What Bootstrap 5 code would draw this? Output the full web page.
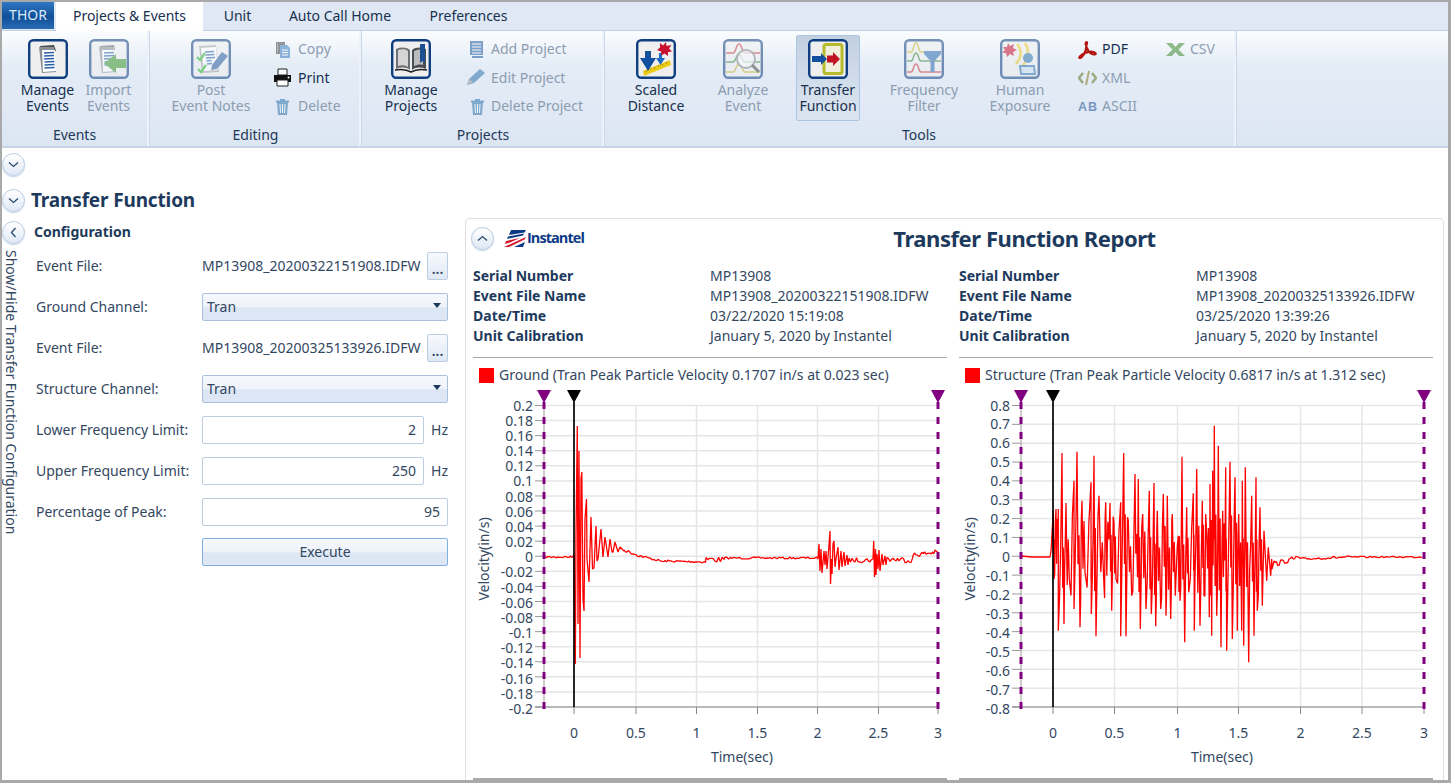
<!doctype html>
<html lang="en">
<head>
<meta charset="utf-8">
<title>THOR - Transfer Function</title>
<link href="https://cdn.jsdelivr.net/npm/bootstrap@5.3.0/dist/css/bootstrap.min.css" rel="stylesheet">
<style>
html,body{height:100%;margin:0;overflow:hidden;background:#fff}
body{font-family:"Noto Sans","Open Sans",sans-serif;font-size:14px;color:#33475f;line-height:20px}
.appframe{width:1451px;height:783px;border:solid #a9a9a9;border-width:2px 3px 3px 2px;overflow:hidden;display:flex;flex-direction:column}
.tabrow{height:28px;background:#dfe8f4;display:flex;align-items:stretch;flex:none}
.thor{width:52px;height:27px;background:linear-gradient(#2f78c4,#0f4f98 55%,#2a6cb4);color:#dbe9f8;text-align:center;line-height:26px;font-size:14px}
.rtab{color:#16304f;padding:4px 0 0;text-align:center;height:28px}
.rtab.on{background:#fff;margin-left:2px;width:147px;height:29px;position:relative;z-index:1}
.rtab.t1{width:69px}
.rtab.t2{width:136px}
.rtab.t3{width:121px}
.ribbon{height:118px;flex:none;display:flex;background:linear-gradient(#fbfdff,#e4ecf6 30%,#dce6f3);border-top:1px solid #bfd0e4;border-bottom:2px solid #c6d6e8}
.rgroup{display:flex;flex-direction:column;border-right:2px solid #eef3f9;flex:none;box-shadow:1px 0 0 #c9d7e8}
.rgbody{display:flex;height:94px;padding-top:4px}
.rglabel{text-align:center;color:#1e3857;height:20px;line-height:20px}
.rglabel.nudge{padding-left:3px}
.bigbtn{display:flex;flex-direction:column;align-items:center;padding-top:4px;color:#16304f;line-height:16px;height:86px;text-align:center;flex:none}
.bigbtn svg{margin-bottom:3px;flex:none}
.bigbtn.off,.smallbtn.off{color:#8c9db1}
.off svg{opacity:.55}
.picked{background:linear-gradient(#c3d0e0,#d3deeb 60%,#dbe5f1);border:1px solid #a9c6e6;border-radius:2px;padding-top:3px;width:64px}
.smallstack{display:flex;flex-direction:column;flex:none;padding-top:0}
.smallbtn{display:flex;align-items:center;height:28.5px;color:#16304f;white-space:nowrap}
.smallbtn svg{flex:none;margin-right:6px}
.smallbtn svg.inset{margin-left:3px;margin-right:4px}
.smallbtn svg.tight{margin-right:5px}
.smallbtn svg.tighter{margin-right:4px}
.w61{width:61px}.w80{width:80px}.w70{width:70px}
.g1{width:147px}.g1 .rgbody{padding-left:15px}
.g2{width:212px}.g2 .rgbody{padding-left:22px;gap:22px}
.g3{width:243px}.g3 .rgbody{padding-left:15px;gap:19px}
.g4{width:632px}.g4 .rgbody{padding-left:17px}
.m17{margin-left:17px}.m18{margin-left:18px}.m29{margin-left:29px}.m26{margin-left:26px}.m23{margin-left:23px}
.roundbtn{width:23px;height:23px;border-radius:50%;background:linear-gradient(#fff,#dfe8f5);border:1px solid #b9cbe0;display:flex;align-items:center;justify-content:center;flex:none;box-shadow:0 1px 1px #c9d6e6}
.spacer1{height:5px;flex:none}
.ttlrow{height:42px;padding-top:6px;display:flex;align-items:center;flex:none}
.ttlrow h1{font-size:19px;font-weight:700;color:#1d3a5c;margin:0 0 0 6px;letter-spacing:-.15px;line-height:26px}
.mainrow{display:flex;flex:1;min-height:0}
.sidebar{width:23px;flex:none;padding-top:3px}
.vtext{writing-mode:vertical-rl;color:#33475f;margin:6px 0 0 -1px;line-height:20px;white-space:nowrap}
.cfg{width:425px;flex:none;padding:0 0 0 9px}
.cfg h2{font-size:14px;font-weight:700;color:#1d3a5c;margin:4px 0 3px;line-height:20px}
.frow{height:41px;display:flex;align-items:center;padding-left:2px;flex:none;width:414px}
.frow.last{margin-top:-1px}
.frow label{width:166px;flex:none;margin:0}
.fwide{flex:1}
.fileval{white-space:nowrap;flex:1}
.form-control.tb,.form-select.tb,.btn.tb{height:28px;border-radius:2px;font-size:14px;line-height:20px;padding:3px 4px;color:#33475f;box-shadow:none}
.form-control.tb{border:1px solid #bccde1;text-align:right;padding-right:7px;background:#fff}
.form-select.tb{border:1px solid #a9c0dc;background:linear-gradient(#f6f9fd,#eef3fa 48%,#dce6f4 54%,#dde7f5);appearance:none}
.selwrap{position:relative;flex:1}
.selwrap::after{content:"";position:absolute;right:7px;top:10px;border:solid transparent;border-width:5px 4.5px 0;border-top-color:#1d3a5c}
.btn.tb.dots{width:21px;padding:6px 0 0;border:1px solid #bccde1;background:linear-gradient(#f7fafd,#dfe8f5);flex:none;line-height:14px;font-weight:600}
.btn.tb.exec{width:246px;border:1px solid #7fb0e0;background:linear-gradient(#f6f9fd,#eef3fa 48%,#dce6f4 54%,#dde7f5);padding:3px 0}
.hz{width:24px;text-align:right;flex:none}
.shortinp{flex:1}
.report{flex:1;border:1px solid #dedede;border-bottom:0;border-radius:5px 5px 0 0;margin-right:4px;display:flex;flex-direction:column;min-width:0;margin-left:15px}
.rhead{height:38px;display:flex;align-items:center;padding-left:5px;flex:none;position:relative}
.rhead h3{position:absolute;left:0;right:0;text-align:center;padding-left:140px;font-size:22px;font-weight:700;color:#1d3a5c;margin:0;letter-spacing:-.45px;line-height:28px}
.logoarea{display:flex;align-items:center;margin-left:10px}
.logoname{font-family:"Open Sans",sans-serif;font-weight:700;font-size:14.5px;letter-spacing:-.95px;color:#0c3a86}
.cols{display:flex;gap:12px;padding:9px 0 0 7px}
.repcol{width:474px;flex:none}
.kv{display:flex;height:20px}
.kv b{width:237px;font-weight:700;color:#1d3a5c;flex:none}
.kv span{white-space:nowrap}
.rule{border-top:1px solid #a8a8a8;margin:11px 0 0;height:0}
.legendrow{display:flex;align-items:center;height:30px;padding:4px 0 0 6px;gap:5px;white-space:nowrap}
.swatch{width:15px;height:15px;background:#f00;flex:none}
.chartsvg{display:block;width:474px;height:382px;margin-top:-1px}
.chartsvg text{font-family:"Noto Sans","Open Sans",sans-serif;font-size:14px;fill:#33475f}
.botbar{height:3px;background:#a9a9a9;margin-top:9px}
</style>
</head>
<body>
<div class="appframe">
  <div class="tabrow">
    <div class="thor">THOR</div>
    <div class="rtab on">Projects &amp; Events</div>
    <div class="rtab t1">Unit</div>
    <div class="rtab t2">Auto Call Home</div>
    <div class="rtab t3">Preferences</div>
  </div>
  <div class="ribbon">
    <div class="rgroup g1">
      <div class="rgbody">
        <div class="bigbtn w61"><svg width="40" height="40" viewBox="0 0 40 40"><rect x="1.2" y="1.2" width="37.6" height="37.6" rx="4" fill="#efefef" stroke="#0f3f80" stroke-width="2.4"/><path d="M12 7l14-1 2 6-14 1z" fill="#4a4a4a"/><path d="M11 8l3 26 14-1-2-25z" fill="#8b8f96"/><path d="M14 11h13l1 21-13 1z" fill="#fff"/><path d="M16 14l10-.5M16 17l10-.5M16 20l10-.5M16.500 23l10-.5M16.500 26l10-.5M16.500 29l10-.5" stroke="#2a5fa8" stroke-width="1.400"/></svg>Manage<br>Events</div>
        <div class="bigbtn w61 off"><svg width="40" height="40" viewBox="0 0 40 40"><rect x="1.2" y="1.2" width="37.6" height="37.6" rx="4" fill="#efefef" stroke="#0f3f80" stroke-width="2.4"/><path d="M11 7l14-1 1 6-14 1z" fill="#666"/><path d="M10 8l3 26 14-1-2-25z" fill="#8b8f96"/><path d="M13 11h13l1 21-13 1z" fill="#fff"/><path d="M15 14l10-.5M15 17l10-.5M15 20l10-.5M15.500 23l6-.5M15.500 26l6-.5" stroke="#2a5fa8" stroke-width="1.300"/><path d="M37 20v9H27v5L15 24.500 27 15v5z" fill="#3f9b2c"/></svg>Import<br>Events</div>
      </div>
      <div class="rglabel">Events</div>
    </div>
    <div class="rgroup g2">
      <div class="rgbody">
        <div class="bigbtn w80 off"><svg width="40" height="40" viewBox="0 0 40 40"><rect x="1.2" y="1.2" width="37.6" height="37.6" rx="4" fill="#efefef" stroke="#0f3f80" stroke-width="2.4"/><path d="M8 7l17-1 3 27-17 1z" fill="#a7a7a7"/><path d="M10 9l15-1 2 23-14 1z" fill="#fff"/><path d="M14 13l9-.5M14.500 16l9-.5M15 19l9-.5M15.500 22l5-.5M16 25l5-.5" stroke="#2a5fa8" stroke-width="1.300"/><path d="M6 18l3 3 5-7M7 30l3 3 5-7" stroke="#26b526" stroke-width="2.200" fill="none"/><path d="M21 26l10-13 6 4-11 13-6 1z" fill="#2d5e9e"/></svg>Post<br>Event Notes</div>
        <div class="smallstack">
          <div class="smallbtn off"><svg width="19" height="19" viewBox="0 0 19 19"><path d="M3 2h9v12H3z" fill="#444"/><path d="M4 4h1M4 6h1M4 8h1M4 10h1M4 12h1" stroke="#bbb"/><path d="M7 5h7l3 3v10H7z" fill="#3b7ebd"/><path d="M9 10h6M9 12.500h6M9 15h6" stroke="#fff" stroke-width="1.100"/></svg>Copy</div>
          <div class="smallbtn"><svg width="19" height="19" viewBox="0 0 19 19"><path d="M5 1h9v6H5z" fill="#fff" stroke="#222"/><path d="M1 7h17v7H1z" fill="#111"/><path d="M4 12h11v6H4z" fill="#fff" stroke="#222"/><circle cx="15.500" cy="9.500" r="1" fill="#fff"/></svg>Print</div>
          <div class="smallbtn off"><svg width="19" height="19" viewBox="0 0 19 19"><path d="M4 5h11l-1 13H5z" fill="#2f74ad"/><path d="M3 3.500h13v2H3zM7 2h5v2H7z" fill="#2f74ad"/><path d="M7 7l.5 9M9.500 7v9M12 7l-.5 9" stroke="#fff" stroke-width="1"/></svg>Delete</div>
        </div>
      </div>
      <div class="rglabel nudge">Editing</div>
    </div>
    <div class="rgroup g3">
      <div class="rgbody">
        <div class="bigbtn w70"><svg width="40" height="40" viewBox="0 0 40 40"><rect x="1.2" y="1.2" width="37.6" height="37.6" rx="4" fill="#efefef" stroke="#0f3f80" stroke-width="2.4"/><path d="M5 10c5-2 10-2 14 1v20c-4-3-9-3-14-1z" fill="#6d7175"/><path d="M7 11c4-1 8-1 10 1v16c-3-2-7-2-10-1z" fill="#d5d5d5"/><path d="M21 11c4-3 9-3 14-1v20c-5-2-10-2-14 1z" fill="#4a4d52"/><path d="M23 12c3-1 6-2 9-1v15c-3-1-6 0-9 1z" fill="#bbb"/><path d="M29 5h5v19l-2.500-2-2.500 2z" fill="#1d4f94"/><path d="M4 31c5-1 11-1 16 2 5-3 11-3 16-2" stroke="#222" stroke-width="1.500" fill="none"/></svg>Manage<br>Projects</div>
        <div class="smallstack">
          <div class="smallbtn off"><svg class="inset" width="19" height="19" viewBox="0 0 19 19"><path d="M2 1h13v14H2z" fill="#1f5d9f"/><path d="M4 16h11v2H4z" fill="#1f5d9f"/><path d="M4 4h9M4 7h9M4 10h9M4 13h9" stroke="#fff" stroke-width="1"/></svg>Add Project</div>
          <div class="smallbtn off"><svg class="tighter" width="22" height="19" viewBox="0 0 22 19"><path d="M2 17l2-6L15 1l5 4-11 10z" fill="#2f74ad"/><path d="M2 17l2-6 4 3z" fill="#999"/></svg>Edit Project</div>
          <div class="smallbtn off"><svg class="inset" width="19" height="19" viewBox="0 0 19 19"><path d="M4 5h11l-1 13H5z" fill="#2f74ad"/><path d="M3 3.500h13v2H3zM7 2h5v2H7z" fill="#2f74ad"/><path d="M7 7l.5 9M9.500 7v9M12 7l-.5 9" stroke="#fff" stroke-width="1"/></svg>Delete Project</div>
        </div>
      </div>
      <div class="rglabel nudge">Projects</div>
    </div>
    <div class="rgroup g4">
      <div class="rgbody">
        <div class="bigbtn w70"><svg width="40" height="40" viewBox="0 0 40 40"><rect x="1.2" y="1.2" width="37.6" height="37.6" rx="4" fill="#efefef" stroke="#0f3f80" stroke-width="2.4"/><path d="M7 32l27-11 1 5-27 11z" fill="#eccb16"/><path d="M10 33l1-2M14 31l1-2M18 30l1-2M22 28l1-2M26 27l1-2M30 25l1-2" stroke="#a08a10" stroke-width=".8"/><path d="M4 19h5v-7h6v7h5L12 32z" fill="#124f9e"/><path d="M20 19h3v-5h3v5h3l-4.500 7z" fill="#1f6bc4"/><path d="M24 4l3 2.500L30 3l.5 4 5-1-2.500 3.500 3 3-4 .5 0 4-3.500-2.500-3 2-.5-4-4-1.500 3-2.500z" fill="#c8102e"/></svg>Scaled<br>Distance</div>
        <div class="bigbtn w70 m17 off"><svg width="40" height="40" viewBox="0 0 40 40"><rect x="1.2" y="1.2" width="37.6" height="37.6" rx="4" fill="#efefef" stroke="#0f3f80" stroke-width="2.4"/><path d="M3 14h7c3 0 3-9 6-9s3 9 6 9h15" stroke="#c63b3b" stroke-width="1.500" fill="none"/><path d="M3 23h7c3 0 3-8 6-8s3 8 6 8h15" stroke="#3d8a3d" stroke-width="1.500" fill="none"/><path d="M3 33h7c3 0 3-8 6-8s3 8 6 8h15" stroke="#c6b52b" stroke-width="1.500" fill="none"/><circle cx="23" cy="20" r="9" fill="#fff" fill-opacity=".7" stroke="#888" stroke-width="2"/><path d="M29 26l7 7" stroke="#444" stroke-width="3"/></svg>Analyze<br>Event</div>
        <div class="bigbtn m18 picked"><svg width="40" height="40" viewBox="0 0 40 40"><rect x="1.2" y="1.2" width="37.6" height="37.6" rx="4" fill="#efefef" stroke="#0f3f80" stroke-width="2.4"/><rect x="16" y="5.500" width="18" height="29" rx="2" fill="#f0f0dc" stroke="#b6bb2c" stroke-width="3"/><path d="M4 17h9v-3l6 6-6 6v-3H4z" fill="#124f9e"/><path d="M19 16.500h6V13l7 7-7 7v-3.500h-6z" fill="#c01323"/></svg>Transfer<br>Function</div>
        <div class="bigbtn w70 m29 off"><svg width="40" height="40" viewBox="0 0 40 40"><rect x="1.2" y="1.2" width="37.6" height="37.6" rx="4" fill="#efefef" stroke="#0f3f80" stroke-width="2.4"/><path d="M3 13h4c3 0 2-9 5-9s2 9 5 9h20" stroke="#c6b52b" stroke-width="1.500" fill="none"/><path d="M3 22h4c3 0 2-8 5-8s2 8 5 8h20" stroke="#3d8a3d" stroke-width="1.500" fill="none"/><path d="M3 33h4c3 0 2-8 5-8s2 8 5 8h20" stroke="#c63b3b" stroke-width="1.500" fill="none"/><path d="M20 12h17v3l-6.500 7v11h-4V22L20 15z" fill="#2d6cb0"/></svg>Frequency<br>Filter</div>
        <div class="bigbtn w70 m26 off"><svg width="40" height="40" viewBox="0 0 40 40"><rect x="1.2" y="1.2" width="37.6" height="37.6" rx="4" fill="#efefef" stroke="#0f3f80" stroke-width="2.4"/><path d="M8 4l2 3 4-2-1 4 4 2-4 2 1 4-4-2-3 3-1-4-4 0 3-3-2-3 4 0z" fill="#c8102e"/><path d="M17 5c5 6 5 13-1 20M25 4c5 8 4 17-4 24" stroke="#e7c92a" stroke-width="2.600" fill="none"/><circle cx="28" cy="19" r="5" fill="#2f74ad"/><path d="M20 27h14l1 8H21z" fill="#cfe0f1" stroke="#2f74ad" stroke-width="2"/></svg>Human<br>Exposure</div>
        <div class="smallstack m23">
          <div class="smallbtn"><svg class="tight" width="19" height="19" viewBox="0 0 19 19"><path d="M8.500 2c-1.500 0-1 4 2 9 2 3 5 4 7 3 1-1-3-3-7-2-4 1-8 3-9 5-1 2 2 1 4-2 2-3 3-7 3-10 .5-2 1-3 0-3z" fill="none" stroke="#b3140f" stroke-width="2.200"/></svg>PDF</div>
          <div class="smallbtn off"><svg class="tight" width="19" height="19" viewBox="0 0 19 19"><path d="M5 5L1 10l4 5M14 5l4 5-4 5" stroke="#5c7a1e" stroke-width="2.500" fill="none"/><path d="M11 3L8 17" stroke="#8a7a1e" stroke-width="2"/></svg>XML</div>
          <div class="smallbtn off"><svg class="tight" width="19" height="19" viewBox="0 0 19 19"><text x="0" y="14" font-family="Liberation Sans" font-weight="700" font-size="12.500" letter-spacing="1" fill="#1f4f96">AB</text></svg>ASCII</div>
        </div>
        <div class="smallstack m29">
          <div class="smallbtn off"><svg class="tight" width="19" height="19" viewBox="0 0 19 19"><path d="M0 3h6l3.500 4L13 3h6l-6.500 6.500L19 16h-6l-3.500-4L6 16H0l6.500-6.500z" fill="#3f8a2c"/></svg>CSV</div>
        </div>
      </div>
      <div class="rglabel">Tools</div>
    </div>
  </div>

  <div class="spacer1"></div>
  <div class="d-flex flex-none"><span class="roundbtn"><svg width="11" height="7" viewBox="0 0 11 7"><path d="M1 1.500l4.500 4 4.500-4" fill="none" stroke="#2a4a70" stroke-width="1.300"/></svg></span></div>
  <div class="ttlrow">
    <span class="roundbtn"><svg width="11" height="7" viewBox="0 0 11 7"><path d="M1 1.500l4.500 4 4.500-4" fill="none" stroke="#2a4a70" stroke-width="1.300"/></svg></span>
    <h1>Transfer Function</h1>
  </div>
  <div class="mainrow">
    <div class="sidebar">
      <span class="roundbtn"><svg width="7" height="11" viewBox="0 0 7 11"><path d="M5.500 1l-4 4.500 4 4.500" fill="none" stroke="#2a4a70" stroke-width="1.300"/></svg></span>
      <div class="vtext">Show/Hide Transfer Function Configuration</div>
    </div>
    <div class="cfg">
      <h2>Configuration</h2>
      <div class="frow"><label>Event File:</label><span class="fileval">MP13908_20200322151908.IDFW</span><button class="btn tb dots">...</button></div>
      <div class="frow"><label>Ground Channel:</label><div class="selwrap"><select class="form-select tb"><option>Tran</option></select></div></div>
      <div class="frow"><label>Event File:</label><span class="fileval">MP13908_20200325133926.IDFW</span><button class="btn tb dots">...</button></div>
      <div class="frow"><label>Structure Channel:</label><div class="selwrap"><select class="form-select tb"><option>Tran</option></select></div></div>
      <div class="frow"><label>Lower Frequency Limit:</label><input class="form-control tb shortinp" value="2"><span class="hz">Hz</span></div>
      <div class="frow"><label>Upper Frequency Limit:</label><input class="form-control tb shortinp" value="250"><span class="hz">Hz</span></div>
      <div class="frow"><label>Percentage of Peak:</label><input class="form-control tb fwide" value="95"></div>
      <div class="frow last"><label></label><button class="btn tb exec">Execute</button></div>
    </div>
    <div class="report">
      <div class="rhead">
        <span class="roundbtn"><svg width="11" height="7" viewBox="0 0 11 7"><path d="M1 5.500l4.500-4 4.500 4" fill="none" stroke="#2a4a70" stroke-width="1.300"/></svg></span>
        <div class="logoarea"><svg width="23" height="17" viewBox="0 0 23 17"><path d="M7 0h15l-1.500 2.500L5 5z" fill="#0c3a86"/><path d="M4 6.500L20 3.500 19 5.500 3 9z" fill="#0c3a86"/><path d="M0 17L22 7l-1.500 2.500L5 17z" fill="#d3122a"/><path d="M2 11l14-3-10 4.500L1 14z" fill="#d3122a"/><path d="M10 17l11-5-2 5z" fill="#0c3a86"/></svg><span class="logoname">Instantel</span></div>
        <h3>Transfer Function Report</h3>
      </div>
      <div class="cols">
        <div class="repcol">
          <div class="kv"><b>Serial Number</b><span>MP13908</span></div>
          <div class="kv"><b>Event File Name</b><span>MP13908_20200322151908.IDFW</span></div>
          <div class="kv"><b>Date/Time</b><span>03/22/2020 15:19:08</span></div>
          <div class="kv"><b>Unit Calibration</b><span>January 5, 2020 by Instantel</span></div>
          <div class="rule"></div>
          <div class="legendrow"><span class="swatch"></span><span>Ground (Tran Peak Particle Velocity 0.1707 in/s at 0.023 sec)</span></div>
          <svg class="chartsvg" id="c1" viewBox="473 388 474 382"></svg>
          <div class="botbar"></div>
        </div>
        <div class="repcol">
          <div class="kv"><b>Serial Number</b><span>MP13908</span></div>
          <div class="kv"><b>Event File Name</b><span>MP13908_20200325133926.IDFW</span></div>
          <div class="kv"><b>Date/Time</b><span>03/25/2020 13:39:26</span></div>
          <div class="kv"><b>Unit Calibration</b><span>January 5, 2020 by Instantel</span></div>
          <div class="rule"></div>
          <div class="legendrow"><span class="swatch"></span><span>Structure (Tran Peak Particle Velocity 0.6817 in/s at 1.312 sec)</span></div>
          <svg class="chartsvg" id="c2" viewBox="959 388 474 382"></svg>
          <div class="botbar"></div>
        </div>
      </div>
    </div>
  </div>
</div>
<script>
var NS="http://www.w3.org/2000/svg";
function el(svg,n,a,t){var e=document.createElementNS(NS,n);for(var k in a)e.setAttribute(k,a[k]);if(t!=null)e.textContent=t;svg.appendChild(e);return e}
var seed=7;function rnd(){seed=(seed*16807)%2147483647;return seed/2147483647}
function chart(id,c){
  var s=document.getElementById(id),i;
  var n=c.yl.length,top=406.5,bot=708;
  for(i=0;i<n;i++){var y=top+(bot-top)*i/(n-1),ly=top+(710-top)*i/(n-1);
    el(s,"line",{x1:c.xl,x2:c.xr,y1:y,y2:y,stroke:"#e6e6e6","stroke-width":1.500});
    el(s,"line",{x1:c.xl-9,x2:c.xl,y1:y,y2:y,stroke:"#999","stroke-width":1});
    el(s,"text",{x:c.xl-11,y:ly+5,"text-anchor":"end"},c.yl[i]);}
  var xn=["0","0.5","1","1.5","2","2.5","3"];
  for(i=0;i<7;i++){var x=c.xs[i];
    if(i>0&&i<6)el(s,"line",{x1:x,x2:x,y1:top,y2:bot,stroke:"#e6e6e6","stroke-width":1.500});
    el(s,"line",{x1:x,x2:x,y1:bot,y2:bot+7,stroke:"#888","stroke-width":1});
    el(s,"text",{x:x,y:739,"text-anchor":"middle"},xn[i]);}
  el(s,"line",{x1:c.xl-9,x2:c.xr,y1:bot,y2:bot,stroke:"#888","stroke-width":1.200});
  el(s,"line",{x1:c.xl,x2:c.xl,y1:top,y2:bot,stroke:"#999","stroke-width":1});
  el(s,"path",{d:c.d,fill:"none",stroke:"#f00","stroke-width":1.300,"stroke-linejoin":"bevel"});
  [c.xl,c.xr].forEach(function(x){
    el(s,"line",{x1:x,x2:x,y1:403,y2:710,stroke:"#800080","stroke-width":3,"stroke-dasharray":"7 8"});
    el(s,"path",{d:"M"+(x-7)+" 391h14l-7 13z",fill:"#800080"});});
  el(s,"line",{x1:c.xs[0],x2:c.xs[0],y1:403,y2:708,stroke:"#000","stroke-width":1.700});
  el(s,"path",{d:"M"+(c.xs[0]-7)+" 391h14l-7 13z",fill:"#000"});
  el(s,"text",{x:c.xtc,y:763,"text-anchor":"middle"},"Time(sec)");
  el(s,"text",{x:0,y:0,"text-anchor":"middle",transform:"translate("+c.yx+" 560) rotate(-90)"},"Velocity(in/s)");
}
function noise(a,x0,x1,y0,y1,amp,st){for(var x=x0;x<x1;x+=st){var y=y0+(y1-y0)*(x-x0)/(x1-x0)+(rnd()-.5)*amp;a.push([x,y])}}
var L=[];
noise(L,545,573,558,558,2,1.5);
L=L.concat([[574,556],[574.5,620],[575.3,665],[576,535],[577.3,427],[578,625],[579,452],[580,659],[581,480],[581.8,473],[583,600],[584,612],[585,520],[586.5,500],[587,560],[589,583],[591,518],[592.5,570],[594,569],[596,527],[597,562],[598,560],[601,530],[603,558],[605,538],[608,558],[610,540],[612,553],[613,553],[615,543],[618,553],[620,548],[624,552]]);
noise(L,624,640,551,557,3,1.5);
noise(L,640,665,557,563,2,1.5);
noise(L,665,706,562,563,2,1.5);
noise(L,706,725,560,561,6,1.8);
noise(L,725,817,559,559,2,1.8);
L=L.concat([[818,560],[819,545],[820,572],[821,550],[822,574],[824,552],[825,566],[826,552],[827,570],[829,546],[830,532],[830.5,585],[831.5,560],[832,575],[833,545],[834,542],[835,568],[836,560],[838,548],[839,571],[841,552],[842,568],[844,553],[845,567],[847,556],[848,566]]);
noise(L,849,873,561,561,5,1.5);
L=L.concat([[873,560],[873.7,542],[874.5,578],[875.5,550],[876,576],[877,555],[878,570],[879,551],[880,572],[882,555],[883,566],[885,557],[886,566]]);
noise(L,887,913,560,561,6,1.5);
noise(L,913,938,556,553,5,1.3);
var Ld="M"+L.map(function(p){return p[0].toFixed(1)+" "+p[1].toFixed(1)}).join("L");

var tops=[[310,395],[318,390],[325,390],[336,222],[348,372],[372,305],[381,218],[396,365],[423,310],[432,230],[447,350],[467,370],[480,372],[492,430],[512,370],[521,222],[535,425],[555,285],[565,300],[578,405],[598,335],[612,312],[622,395],[640,345],[652,350],[667,405],[685,470],[696,233],[710,385],[730,343],[740,270],[757,365],[770,465],[780,315],[788,275],[793,140],[805,200],[818,395],[827,265],[840,248],[855,295],[866,405],[877,305],[886,265],[905,350],[918,295],[930,385],[942,455],[955,505],[965,540]];
var bots=[[312,600],[325,755],[342,735],[358,600],[372,690],[390,745],[405,580],[424,705],[438,772],[462,620],[485,695],[498,600],[512,772],[528,772],[545,650],[571,750],[588,690],[604,705],[617,742],[632,690],[648,710],[662,720],[676,650],[690,665],[704,790],[716,640],[733,755],[750,740],[762,650],[778,715],[785,770],[800,710],[813,805],[830,815],[847,780],[862,755],[875,755],[881,800],[896,850],[912,770],[922,695],[937,680],[950,605],[962,590]];
var pts=[];
tops.forEach(function(p){pts.push(p)});bots.forEach(function(p){pts.push(p)});
pts.sort(function(a,b){return a[0]-b[0]});
var R=[[1021,557],[1032,558],[1050,558],[1051,552]];
for(var i=0;i<pts.length;i++){
  var p=pts[i];R.push([950+p[0]/3,380+p[1]/3]);
  if(i<pts.length-1&&p[0]<935){var q=pts[i+1],x0=950+p[0]/3,dx=(q[0]-p[0])/3;
    var same=(p[1]<535)===(q[1]<535);
    if(same){R.push([x0+dx*.25,535+rnd()*45]);R.push([x0+dx*.5,505+rnd()*35]);R.push([x0+dx*.75,535+rnd()*45]);}
    else{R.push([x0+dx*.35,565+rnd()*35]);R.push([x0+dx*.65,515+rnd()*35]);}
  }
}
R=R.concat([[1272,570],[1274,562]]);
noise(R,1275,1300,565,558,5,1.4);
noise(R,1300,1350,560,558,2.5,1.8);
noise(R,1350,1424,558,558,1.5,2);
var Rd="M"+R.map(function(p){return p[0].toFixed(1)+" "+p[1].toFixed(1)}).join("L");

chart("c1",{xl:544,xr:938,xs:[574,636,696.5,757.5,817.5,878.5,938],xtc:742,yx:489,d:Ld,
 yl:["0.2","0.18","0.16","0.14","0.12","0.1","0.08","0.06","0.04","0.02","0","-0.02","-0.04","-0.06","-0.08","-0.1","-0.12","-0.14","-0.16","-0.18","-0.2"]});
chart("c2",{xl:1021,xr:1424,xs:[1053,1114.5,1177.5,1238.5,1300.5,1362,1424],xtc:1222,yx:974.5,d:Rd,
 yl:["0.8","0.7","0.6","0.5","0.4","0.3","0.2","0.1","0","-0.1","-0.2","-0.3","-0.4","-0.5","-0.6","-0.7","-0.8"]});
</script>
<script src="https://cdn.jsdelivr.net/npm/bootstrap@5.3.0/dist/js/bootstrap.bundle.min.js"></script>
</body>
</html>
